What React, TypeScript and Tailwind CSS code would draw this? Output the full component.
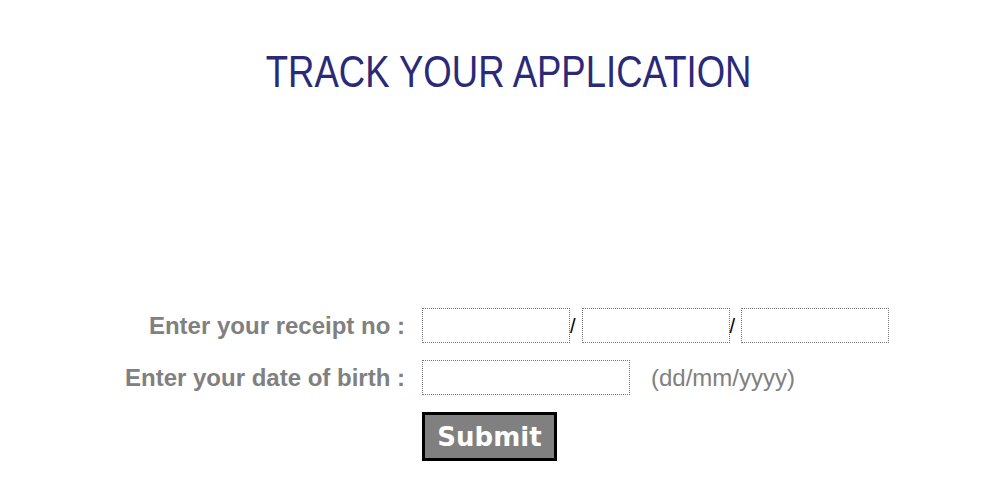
export default function App() {
  return (
    <div className="w-[1008px] h-[498px] bg-white font-['Liberation_Sans',Arial,sans-serif]">
      <div className="pt-[50px] pl-[9px] text-center">
        <h1 className="inline-block scale-x-[0.83] origin-center text-[44px] leading-[44px] text-[#2a2a78] whitespace-nowrap">
          TRACK YOUR APPLICATION
        </h1>
      </div>

      <div className="mt-[214px] grid grid-cols-[405px_auto] gap-x-[17px] gap-y-[17px]">
        <label className="flex items-center justify-end h-[35px] text-[24px] font-bold text-[#808080]">
          Enter your receipt no :
        </label>
        <div className="flex items-center h-[35px]">
          <input className="w-[148px] h-[35px] border border-dotted border-[#777] outline-none" />
          <span className="text-[20px] text-black mr-[6px]">/</span>
          <input className="w-[148px] h-[35px] border border-dotted border-[#777] outline-none" />
          <span className="text-[20px] text-black mr-[6px]">/</span>
          <input className="w-[148px] h-[35px] border border-dotted border-[#777] outline-none" />
        </div>

        <label className="flex items-center justify-end h-[35px] text-[24px] font-bold text-[#808080]">
          Enter your date of birth :
        </label>
        <div className="flex items-center h-[35px]">
          <input className="w-[208px] h-[35px] border border-dotted border-[#777] outline-none" />
          <span className="ml-[21px] text-[24px] text-[#808080]">(dd/mm/yyyy)</span>
        </div>

        <div />
        <div>
          <button className="w-[135px] h-[49px] border-[3px] border-black bg-[#808080] text-white text-[26px] font-bold font-['DejaVu_Sans',Verdana,sans-serif] leading-none">
            Submit
          </button>
        </div>
      </div>
    </div>
  );
}
